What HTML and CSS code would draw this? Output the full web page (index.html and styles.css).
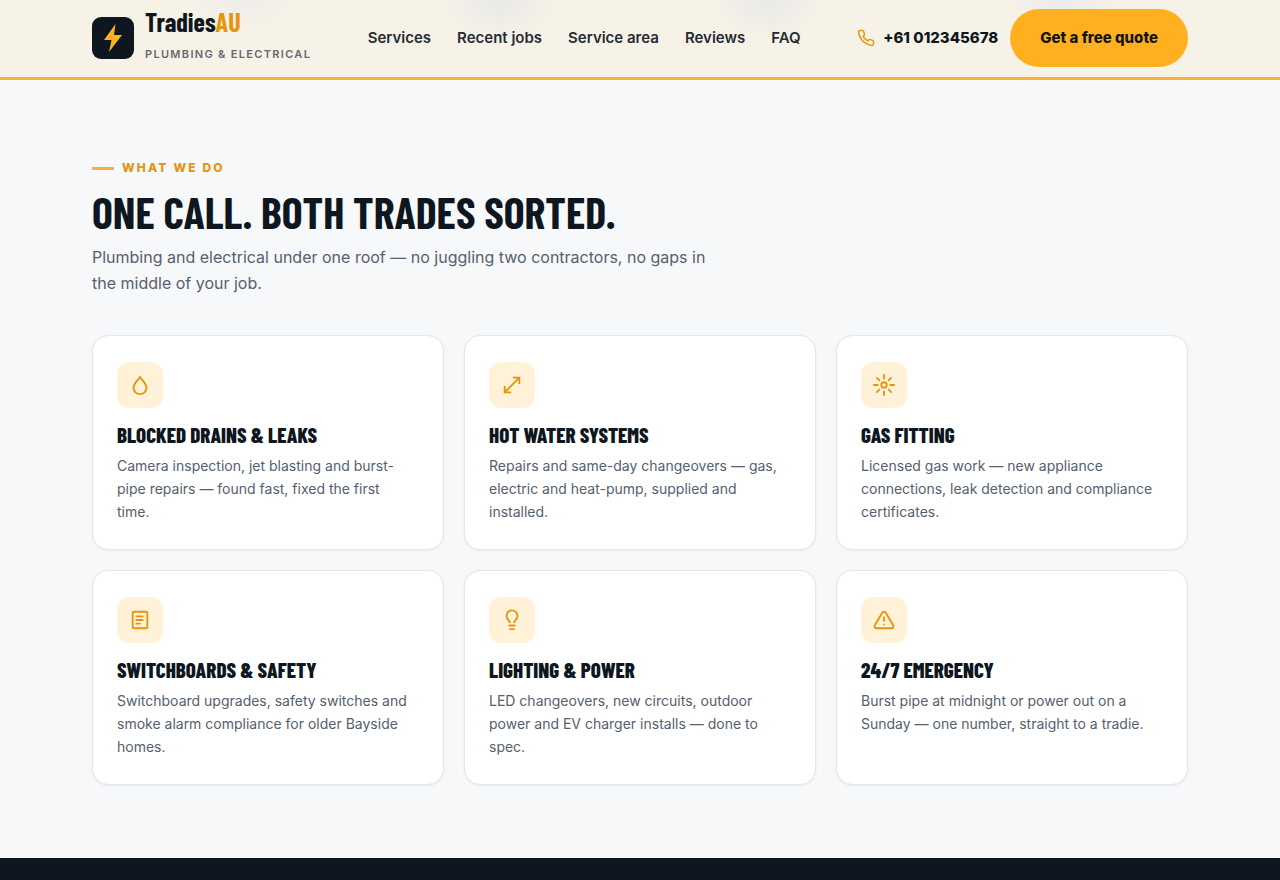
FILE: index.html
```html
<!DOCTYPE html>
<html lang="en-AU">
<head>
<meta charset="utf-8">
<meta name="viewport" content="width=device-width, initial-scale=1">
<title>TradiesAU – Plumbing &amp; Electrical</title>
<link rel="stylesheet" href="styles.css">
</head>
<body>
<header class="site-header">
  <div class="container header-row">
    <a class="brand" href="#top">
      <span class="brand-mark"><svg width="26" height="30" viewBox="0 0 26 30" aria-hidden="true"><path d="M15.5 1 4 17h7.500L9 29 22 12h-8z" fill="#ffb020"/></svg></span>
      <span class="brand-text">
        <span class="brand-name">Tradies<span class="brand-accent">AU</span></span>
        <span class="brand-tag">PLUMBING &amp; ELECTRICAL</span>
      </span>
    </a>
    <nav class="nav" aria-label="Main">
      <a href="#services">Services</a>
      <a href="#jobs">Recent jobs</a>
      <a href="#area">Service area</a>
      <a href="#reviews">Reviews</a>
      <a href="#faq">FAQ</a>
    </nav>
    <div class="actions">
      <a class="phone" href="tel:+61012345678">
        <svg class="line-icon" width="18" height="18" viewBox="0 0 24 24" aria-hidden="true"><path d="M22 16.920v3a2 2 0 0 1-2.180 2 19.800 19.800 0 0 1-8.630-3.070 19.500 19.500 0 0 1-6-6 19.800 19.800 0 0 1-3.070-8.670A2 2 0 0 1 4.110 2h3a2 2 0 0 1 2 1.720c.13.960.36 1.900.7 2.810a2 2 0 0 1-.45 2.110L8.090 9.910a16 16 0 0 0 6 6l1.270-1.270a2 2 0 0 1 2.110-.45c.91.34 1.850.57 2.810.7A2 2 0 0 1 22 16.920z"/></svg>
        <span>+61 012345678</span>
      </a>
      <a class="button" href="#quote">Get a free quote</a>
    </div>
  </div>
</header>
<main>
  <section class="services" id="services">
    <div class="container">
      <div class="section-head">
        <p class="eyebrow">WHAT WE DO</p>
        <h2 class="section-title">ONE CALL. BOTH TRADES SORTED.</h2>
        <p class="lead">Plumbing and electrical under one roof — no juggling two contractors, no gaps in the middle of your job.</p>
      </div>
      <div class="grid">
        <article class="card">
          <span class="card-icon"><svg class="line-icon" width="22" height="22" viewBox="0 0 24 24" aria-hidden="true"><path d="M12 3c-1 3-7 6.500-7 12a7 7 0 0 0 14 0c0-5.500-6-9-7-12z"/></svg></span>
          <h3 class="card-title">BLOCKED DRAINS &amp; LEAKS</h3>
          <p class="card-text">Camera inspection, jet blasting and burst-pipe repairs — found fast, fixed the first time.</p>
        </article>
        <article class="card">
          <span class="card-icon"><svg class="line-icon square" width="22" height="22" viewBox="0 0 24 24" aria-hidden="true"><path d="M4 20 20 4M13 4h7v7M4 13v7h7"/></svg></span>
          <h3 class="card-title">HOT WATER SYSTEMS</h3>
          <p class="card-text">Repairs and same-day changeovers — gas, electric and heat-pump, supplied and installed.</p>
        </article>
        <article class="card">
          <span class="card-icon"><svg class="line-icon" width="22" height="22" viewBox="0 0 24 24" aria-hidden="true"><circle cx="12" cy="12" r="3"/><path d="M12 1v4M12 19v4M1 12h4M19 12h4M4.200 4.200 7 7M17 17l2.800 2.800M4.200 19.800 7 17M17 7l2.800-2.800"/></svg></span>
          <h3 class="card-title">GAS FITTING</h3>
          <p class="card-text">Licensed gas work — new appliance connections, leak detection and compliance certificates.</p>
        </article>
        <article class="card">
          <span class="card-icon"><svg class="line-icon" width="22" height="22" viewBox="0 0 24 24" aria-hidden="true"><rect x="4" y="3" width="16" height="18" rx="1.500"/><path d="M8 8h7M8 12h7M8 16h4"/></svg></span>
          <h3 class="card-title">SWITCHBOARDS &amp; SAFETY</h3>
          <p class="card-text">Switchboard upgrades, safety switches and smoke alarm compliance for older Bayside homes.</p>
        </article>
        <article class="card">
          <span class="card-icon"><svg class="line-icon" width="22" height="22" viewBox="0 0 24 24" aria-hidden="true"><path d="M9 18h6M10 22h4M9.500 14.500c-.3-1.300-1-2-1.900-3A6 6 0 0 1 6 7.500a6 6 0 0 1 12 0c0 1.600-.6 2.800-1.600 4-.9 1-1.600 1.700-1.900 3"/></svg></span>
          <h3 class="card-title">LIGHTING &amp; POWER</h3>
          <p class="card-text">LED changeovers, new circuits, outdoor power and EV charger installs — done to spec.</p>
        </article>
        <article class="card">
          <span class="card-icon"><svg class="line-icon" width="22" height="22" viewBox="0 0 24 24" aria-hidden="true"><path d="M10.290 3.860 1.820 18a2 2 0 0 0 1.710 3h16.940a2 2 0 0 0 1.710-3L13.710 3.860a2 2 0 0 0-3.420 0zM12 9v4M12 17h.01"/></svg></span>
          <h3 class="card-title">24/7 EMERGENCY</h3>
          <p class="card-text">Burst pipe at midnight or power out on a Sunday — one number, straight to a tradie.</p>
        </article>
      </div>
    </div>
  </section>
  <section class="jobs" id="jobs" aria-label="Recent jobs"></section>
</main>
</body>
</html>
```
FILE: styles.css
```css
:root {
  --ink: #0e1620;
  --amber: #ffb020;
  --amber-dark: #e8930c;
  --muted: #56606e;
  --display: "Barlow Condensed", "Roboto Condensed", "Liberation Sans Narrow", "Liberation Sans", sans-serif;
}

* { box-sizing: border-box; }

body {
  margin: 0;
  display: flex;
  flex-direction: column;
  min-height: 100vh;
  background: #f6f8fa;
  color: var(--ink);
  font-family: Inter, "Liberation Sans", sans-serif;
  font-size: 16px;
}

a { color: inherit; text-decoration: none; }
h2, h3, p { margin: 0; }

main {
  flex: 1;
  display: flex;
  flex-direction: column;
}

.container {
  width: 100%;
  max-width: 1144px;
  margin: 0 auto;
  padding: 0 24px;
}

.site-header {
  position: sticky;
  top: 0;
  z-index: 10;
  border-bottom: 3px solid #f9b033;
  background:
    radial-gradient(ellipse 60px 32px at 19% 0, #efedeb, transparent),
    radial-gradient(ellipse 60px 36px at 39% 4px, #e9e9e9, transparent),
    radial-gradient(ellipse 56px 36px at 60% 4px, #e9e9e9, transparent),
    radial-gradient(ellipse 60px 32px at 83% 0, #ebebeb, transparent),
    #f7f2e7;
}

.header-row {
  display: flex;
  align-items: center;
  justify-content: space-between;
  min-height: 77px;
  padding-bottom: 2px;
}

.brand {
  display: flex;
  align-items: center;
  gap: 11px;
}

.brand-mark {
  display: grid;
  place-items: center;
  width: 42px;
  height: 42px;
  border-radius: 9px;
  background: var(--ink);
}

.brand-text {
  display: flex;
  flex-direction: column;
  gap: 10px;
  padding-bottom: 6px;
}

.brand-name {
  font: 700 26px/28px var(--display);
}

.brand-accent { color: var(--amber-dark); }

.brand-tag {
  color: #626a72;
  font-size: 11px;
  font-weight: 600;
  line-height: 16px;
  letter-spacing: 0.12em;
}

.nav {
  display: flex;
  gap: 26px;
  color: #252c35;
  font-size: 15px;
  font-weight: 600;
}

.actions {
  display: flex;
  align-items: center;
  gap: 12px;
}

.phone {
  display: flex;
  align-items: center;
  gap: 8px;
  font-size: 15px;
  font-weight: 800;
}

.phone svg, .card-icon { color: var(--amber-dark); }

.line-icon {
  fill: none;
  stroke: currentColor;
  stroke-width: 2;
  stroke-linecap: round;
  stroke-linejoin: round;
}

.line-icon.square {
  stroke-linecap: butt;
  stroke-linejoin: miter;
}

.button {
  padding: 16px 30px;
  border-radius: 29px;
  background: var(--amber);
  color: #16140f;
  font-size: 15px;
  font-weight: 800;
  line-height: 26px;
}

.services { padding: 76px 0 73px; }

.section-head {
  max-width: 640px;
  margin-bottom: 39px;
}

.eyebrow {
  display: flex;
  align-items: center;
  gap: 8px;
  color: var(--amber-dark);
  font-size: 12px;
  font-weight: 800;
  line-height: 24px;
  letter-spacing: 0.18em;
}

.eyebrow::before {
  content: "";
  width: 22px;
  height: 3px;
  background: #f9b033;
}

.section-title {
  margin: 8px 0;
  font: 700 44px/48px var(--display);
}

.lead {
  color: var(--muted);
  font-size: 16px;
  line-height: 26px;
}

.grid {
  display: grid;
  grid-template-columns: repeat(auto-fit, minmax(300px, 1fr));
  gap: 20px;
}

.card {
  padding: 26px 24px;
  border: 1px solid #e2e6eb;
  border-radius: 16px;
  background: #fff;
  box-shadow: 0 1px 3px rgb(14 22 32 / 5%);
}

.card-icon {
  display: grid;
  place-items: center;
  width: 46px;
  height: 46px;
  border-radius: 12px;
  background: #fff2d9;
}

.card-title {
  margin: 16px 0 8px;
  font: 800 21px/22px var(--display);
}

.card-text {
  max-width: 294px;
  color: var(--muted);
  font-size: 14px;
  line-height: 23px;
}

.jobs {
  flex: 1;
  min-height: 22px;
  background: #0e1621;
}
```
